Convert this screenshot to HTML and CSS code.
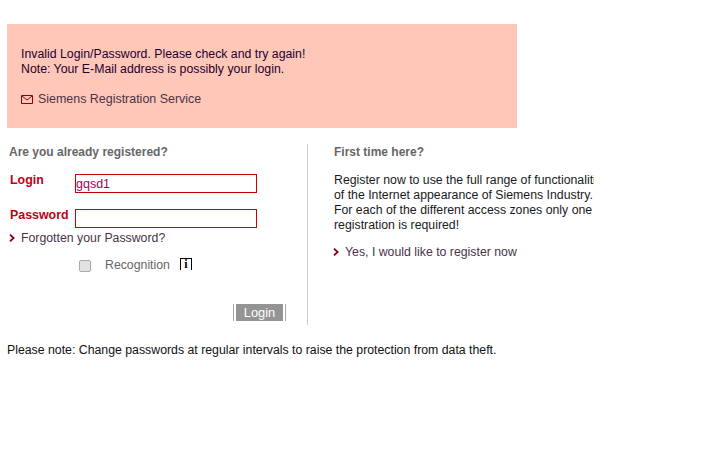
FILE: index.html
```html
<!DOCTYPE html>
<html lang="en">
<head>
<meta charset="utf-8">
<title>Login</title>
<link rel="stylesheet" href="styles.css">
</head>
<body>
<main class="page">
  <section class="alert">
    <p class="alert-text">Invalid Login/Password. Please check and try again!<br>Note: Your E-Mail address is possibly your login.</p>
    <a class="service" href="#">
      <svg class="mail" width="12" height="9" viewBox="0 0 12 9" aria-hidden="true"><path d="M.5.5h11v8H.5zM1 1l5 4 5-4" fill="none" stroke="#8c0014"/></svg>
      Siemens Registration Service
    </a>
  </section>
  <div class="columns">
    <form class="login">
      <h2 class="heading">Are you already registered?</h2>
      <div class="field field-first">
        <label class="label" for="l">Login</label>
        <input class="input" id="l" value="gqsd1">
      </div>
      <div class="field field-second">
        <label class="label" for="p">Password</label>
        <input class="input" id="p" type="password">
      </div>
      <a class="link link-forgot" href="#"><svg class="chev" width="6" height="8" viewBox="0 0 6 8" aria-hidden="true"><path d="M1 .6 4.6 4 1 7.4" fill="none" stroke="#8c0014" stroke-width="1.8"/></svg>Forgotten your Password?</a>
      <div class="recognition">
        <span class="checkbox"></span>
        <span class="rec-label">Recognition</span>
        <span class="info">i</span>
      </div>
      <div class="actions">
        <button class="button" type="button">Login</button>
      </div>
    </form>
    <section class="register">
      <h2 class="heading heading-right">First time here?</h2>
      <p class="intro"><span class="nowrap">Register now to use the full range of functionalities</span><br><span class="nowrap">of the Internet appearance of Siemens Industry.</span><br>For each of the different access zones only one<br>registration is required!</p>
      <a class="link link-register" href="#"><svg class="chev" width="6" height="8" viewBox="0 0 6 8" aria-hidden="true"><path d="M1 .6 4.6 4 1 7.4" fill="none" stroke="#8c0014" stroke-width="1.8"/></svg>Yes, I would like to register now</a>
    </section>
  </div>
  <p class="note">Please note: Change passwords at regular intervals to raise the protection from data theft.</p>
</main>
</body>
</html>
```

FILE: styles.css
```css
html, body {
  margin: 0;
  background: #fff;
}
body {
  font-family: "Liberation Sans", Arial, sans-serif;
  font-size: 12.3px;
  line-height: 15px;
  color: #000;
}
.page {
  padding: 24px 0 0 7px;
  width: 713px;
  box-sizing: border-box;
  overflow: hidden;
}
.alert {
  box-sizing: border-box;
  width: 510px;
  height: 104px;
  padding: 23px 14px 0;
  background: #ffc7b8;
}
.alert-text {
  margin: 0;
  color: #1e0030;
}
.service {
  display: flex;
  align-items: center;
  gap: 5px;
  margin-top: 15px;
  font-size: 12.45px;
  color: #4b3348;
  text-decoration: none;
}
.mail {
  flex: none;
}
.columns {
  display: flex;
  margin-top: 16px;
}
.login {
  box-sizing: border-box;
  width: 301px;
  height: 181px;
  padding: 0 0 0 2px;
  border-right: 1px solid #ccc;
}
.heading {
  margin: 1px 0 0;
  font-size: 12px;
  line-height: 15px;
  font-weight: bold;
  color: #666;
}
.field {
  display: flex;
  align-items: flex-start;
}
.field-first {
  margin-top: 14px;
}
.field-second {
  margin-top: 16px;
}
.label {
  width: 65px;
  margin-left: 1px;
  font-size: 12.4px;
  line-height: 13px;
  font-weight: bold;
  color: #c00014;
}
.input {
  box-sizing: border-box;
  width: 182px;
  height: 19px;
  margin: 0;
  padding: 0;
  border: 1px solid #c80000;
  border-radius: 0;
  outline: 0;
  background: #fff;
  font: 12.5px "Liberation Sans", Arial, sans-serif;
  color: #a5005a;
}
.link {
  display: flex;
  align-items: center;
  color: #4b3348;
  text-decoration: none;
}
.chev {
  flex: none;
  margin: 0 6px 2px 0;
}
.link-forgot {
  margin-top: 3px;
}
.recognition {
  display: flex;
  align-items: flex-start;
  margin-top: 11px;
  padding-left: 70px;
  color: #666;
}
.checkbox {
  box-sizing: border-box;
  width: 12px;
  height: 12px;
  margin-top: 3px;
  border: 1px solid #aaa;
  border-radius: 2px;
  background: #e2e2e2;
}
.rec-label {
  margin: 1px 0 0 14px;
}
.info {
  box-sizing: border-box;
  width: 12px;
  height: 12px;
  margin: 1px 0 0 10px;
  border: 1px solid #000;
  border-bottom: 0;
  font: bold 12px/11px "Liberation Serif", serif;
  color: #000;
  text-align: center;
}
.actions {
  display: flex;
  justify-content: flex-end;
  margin-top: 31px;
  padding-right: 21px;
}
.button {
  box-sizing: border-box;
  width: 53px;
  height: 17px;
  padding: 0;
  border: solid #aaa;
  border-width: 0 1px;
  background: linear-gradient(#949494, #949494) center / 47px 17px no-repeat #fff;
  font: 12.8px/17px "Liberation Sans", Arial, sans-serif;
  color: #fff;
}
.register {
  box-sizing: border-box;
  width: 261px;
  margin-left: 25px;
  overflow: hidden;
}
.heading-right {
  padding-left: 1px;
}
.intro {
  margin: 13px 0 0 1px;
  color: #1a1a1a;
}
.nowrap {
  white-space: nowrap;
}
.link-register {
  margin-top: 12px;
}
.note {
  margin: 18px 0 0;
  color: #111;
}
```
